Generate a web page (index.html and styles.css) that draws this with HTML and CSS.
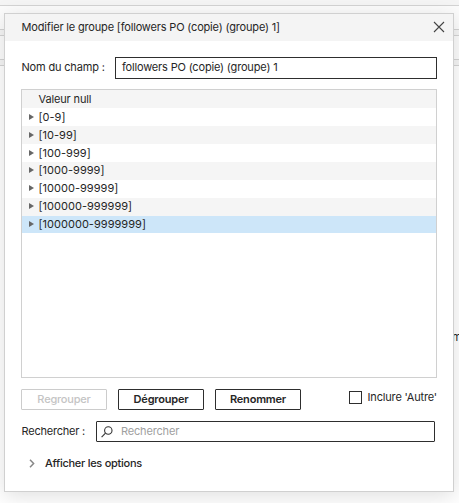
FILE: index.html
```html
<!DOCTYPE html>
<html lang="fr">
<head>
<meta charset="utf-8">
<title>Modifier le groupe</title>
<link rel="stylesheet" href="styles.css">
</head>
<body>
<div class="backdrop">
  <div class="strip strip-top"></div>
  <div class="strip strip-gap"></div>
  <div class="strip strip-divider"></div>
  <div class="strip strip-bar"></div>
  <div class="strip strip-divider"></div>
  <div class="workspace"><span class="clipped">m</span></div>
</div>
<section class="dialog">
  <header class="header">
    <h1 class="title">Modifier le groupe [followers PO (copie) (groupe) 1]</h1>
    <svg class="close" viewBox="0 0 12 12"><path d="M1 1l10 10M11 1L1 11"/></svg>
  </header>
  <div class="body">
    <div class="field">
      <span class="label name-label">Nom du champ :</span>
      <div class="input"><span class="name-value">followers PO (copie) (groupe) 1</span></div>
    </div>
    <ul class="list">
      <li class="row"><i class="arrow none"></i><span class="null">Valeur null</span></li>
      <li class="row"><i class="arrow"></i><span>[0-9]</span></li>
      <li class="row"><i class="arrow"></i><span>[10-99]</span></li>
      <li class="row"><i class="arrow"></i><span>[100-999]</span></li>
      <li class="row raised"><i class="arrow"></i><span>[1000-9999]</span></li>
      <li class="row raised"><i class="arrow"></i><span>[10000-99999]</span></li>
      <li class="row raised"><i class="arrow"></i><span>[100000-999999]</span></li>
      <li class="row raised selected"><i class="arrow"></i><span>[1000000-9999999]</span></li>
    </ul>
    <div class="actions">
      <button class="button" disabled>Regrouper</button>
      <button class="button">Dégrouper</button>
      <button class="button">Renommer</button>
      <label class="check"><span class="box"></span><span class="check-text">Inclure 'Autre'</span></label>
    </div>
    <div class="search">
      <span class="label search-label">Rechercher :</span>
      <div class="input search-input">
        <svg class="lens" viewBox="0 0 12 12"><circle cx="7.300" cy="4.500" r="3.700"/><path d="M4.500 7.200L.6 11.200"/></svg>
        <span class="placeholder">Rechercher</span>
      </div>
    </div>
    <div class="more">
      <svg class="chevron" viewBox="0 0 6 9"><path d="M1 .8l3.600 3.700L1 8.200"/></svg>
      <span class="more-text">Afficher les options</span>
    </div>
  </div>
</section>
</body>
</html>
```
FILE: styles.css
```css
* { box-sizing: border-box; }
body {
  margin: 0;
  width: 459px;
  height: 503px;
  overflow: hidden;
  position: relative;
  background: #fff;
  color: #262626;
  font: 11px/14px Inter, "Liberation Sans", sans-serif;
  letter-spacing: -.17px;
  white-space: nowrap;
}
.backdrop { position: absolute; inset: 0; display: flex; flex-direction: column; }
.strip { flex: none; border-bottom: 1px solid #d4d4d4; }
.strip-top { height: 6px; background: #f5f5f5; }
.strip-gap { height: 24px; background: #fcfcfc; }
.strip-divider { height: 6px; background: #f5f5f5; }
.strip-bar { height: 24px; background: #fcfcfc; }
.workspace { flex: 1; position: relative; overflow: hidden; }
.clipped { position: absolute; left: 452px; top: 264px; }
.dialog {
  position: absolute;
  left: 4px;
  top: 13px;
  width: 450px;
  height: 479px;
  background: #fff;
  border: 1px solid #d0d0d0;
  box-shadow: 0 4px 20px rgba(0, 0, 0, .13);
}
.header {
  display: flex;
  justify-content: space-between;
  height: 27px;
  padding: 6px 8px 0 16.500px;
  background: #f4f4f4;
}
.title { margin: 0; font: inherit; }
.close { width: 12px; height: 12px; margin-top: 1px; fill: none; stroke: #444; stroke-width: 1.100; }
.body { padding: 16px 16px 0; }
.field { display: flex; align-items: center; height: 22px; }
.label { flex: none; padding-bottom: 2px; }
.name-label { width: 94px; padding-left: .5px; }
.name-value, .placeholder { padding-bottom: 2px; }
.input { flex: 1; display: flex; align-items: center; height: 22px; padding-left: 6px; border: 1px solid #2e2e2e; }
.list { height: 289px; margin: 10px 0 11px; padding: 0; list-style: none; border: 1px solid #d0d0d0; letter-spacing: .03px; }
.row { display: flex; align-items: center; height: 18px; padding-left: 7px; }
.row:nth-child(odd) { background: #f5f5f5; }
.row.raised { padding-bottom: 2px; }
.row.selected { height: 17px; padding-bottom: 1px; background: #cde6f9; }
.null { letter-spacing: -.14px; }
.arrow { width: 0; height: 0; margin-right: 4.500px; border: solid transparent; border-width: 3.500px 0 3.500px 5px; border-left-color: #666; }
.arrow.none { border-left-color: transparent; }
.actions { display: flex; gap: 11px; height: 21px; }
.button {
  width: 86px;
  height: 21px;
  padding: 0;
  border: 1px solid #2e2e2e;
  border-radius: 1px;
  background: #fff;
  color: #262626;
  font: 600 11px/19px Inter, "Liberation Sans", sans-serif;
  letter-spacing: -.2px;
}
.button:disabled { border-color: #ccc; color: #c4c4c4; font-weight: 500; }
.check { display: flex; margin-left: auto; }
.check-text { padding-top: 1px; }
.box { width: 13px; height: 13px; margin: 2px 6px 0 0; border: 1px solid #2e2e2e; }
.search { display: flex; align-items: center; height: 21px; margin-top: 11px; padding-right: 2px; }
.search-label { width: 75px; padding-left: .5px; letter-spacing: -.22px; }
.search-input { height: 21px; padding-left: 4px; border-radius: 1px; }
.lens { width: 12px; height: 12px; margin-right: 8px; fill: none; stroke: #333; stroke-width: 1.100; }
.placeholder { color: #a0a0a0; }
.more { display: flex; align-items: center; height: 14px; margin-top: 14px; padding-left: 8px; }
.chevron { width: 6px; height: 9px; margin-right: 10px; fill: none; stroke: #888; stroke-width: 1.500; }
.more-text { font-weight: 500; letter-spacing: -.27px; }
```
